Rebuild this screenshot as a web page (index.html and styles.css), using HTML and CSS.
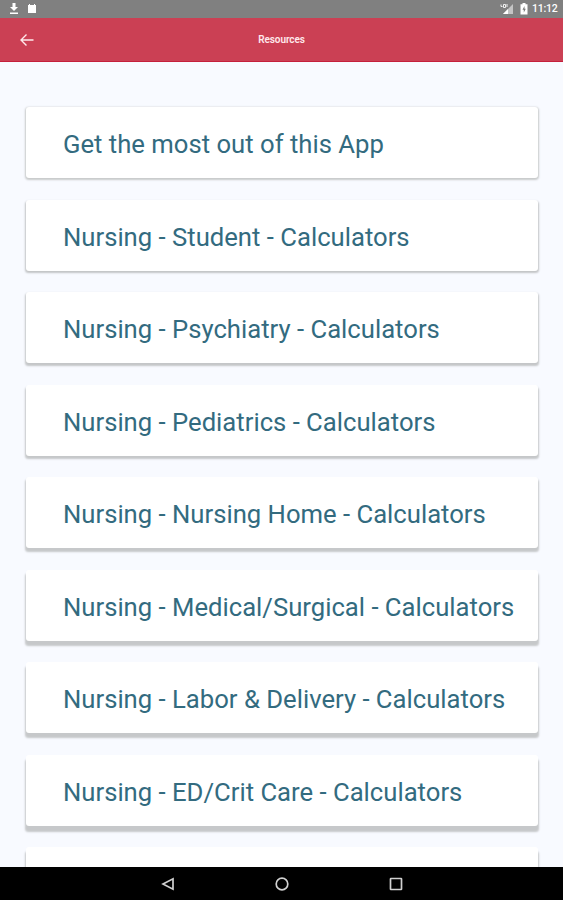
FILE: index.html
```html
<!DOCTYPE html>
<html lang="en">
<head>
<meta charset="utf-8">
<title>Resources</title>
<link rel="stylesheet" href="styles.css">
</head>
<body>
<div class="screen">
  <div class="status">
    <svg class="download" width="10" height="12" viewBox="0 0 10 12"><path d="M3.5 0h3v4H9L5 8 1 4h2.5zM1 9.5h8V11H1z" fill="#fff"/></svg>
    <svg class="card-icon" width="10" height="10" viewBox="0 0 10 10"><path d="M1 1h1V0h1v1h4V0h1v1h1v8H1z" fill="#fff"/></svg>
    <span class="spacer"></span>
    <svg class="signal" width="14" height="12" viewBox="0 0 14 12"><path d="M13 1v10H3z" fill="#c4c4c4"/><path d="M3 11l5-5v5z" fill="#fff"/><path d="M1 1.5v2h1.5m1-2h2v3h-2zM7 1v3" fill="none" stroke="#eee"/></svg>
    <svg class="battery" width="8" height="12" viewBox="0 0 8 12"><path d="M2.5 0h3v1.3H7.5V11.500H.5V1.300h2z" fill="#fff"/><path d="M4.500 3L2.500 6.700h1.300V9.500l2-3.800H4.500z" fill="#777"/></svg>
    <span class="clock">11:12</span>
  </div>
  <header class="bar">
    <svg class="back" width="16" height="14" viewBox="0 0 16 14"><path d="M14.500 7H2M7.500 1.500L2 7l5.500 5.500" fill="none" stroke="#ffe9ec" stroke-width="1.400"/></svg>
    <h1 class="title">Resources</h1>
    <span></span>
  </header>
  <main class="list">
    <div class="item d1">Get the most out of this App</div>
    <div class="item d2">Nursing - Student - Calculators</div>
    <div class="item d3">Nursing - Psychiatry - Calculators</div>
    <div class="item d4">Nursing - Pediatrics - Calculators</div>
    <div class="item d5">Nursing - Nursing Home - Calculators</div>
    <div class="item d6">Nursing - Medical/Surgical - Calculators</div>
    <div class="item d7">Nursing - Labor &amp; Delivery - Calculators</div>
    <div class="item d8">Nursing - ED/Crit Care - Calculators</div>
    <div class="item d8"></div>
  </main>
  <nav class="nav">
    <svg width="14" height="14" viewBox="0 0 14 14"><path d="M12 1.800v10.400L2 7z" fill="none" stroke="#d0d0d0" stroke-width="1.700"/></svg>
    <svg width="14" height="14" viewBox="0 0 14 14"><circle cx="7" cy="7" r="5.800" fill="none" stroke="#d0d0d0" stroke-width="1.700"/></svg>
    <svg width="14" height="14" viewBox="0 0 14 14"><rect x="1.500" y="1.500" width="11" height="11" rx=".5" fill="none" stroke="#d0d0d0" stroke-width="1.700"/></svg>
  </nav>
</div>
</body>
</html>
```
FILE: styles.css
```css
* { box-sizing: border-box; }
body { margin: 0; font-family: Roboto, sans-serif; }
.screen { width: 563px; height: 900px; display: flex; flex-direction: column; overflow: hidden; background: #f8faff; }
.status { flex: none; height: 18px; background: #808080; display: flex; align-items: center; padding: 0 5px 0 9px; color: #fff; }
.card-icon { margin-left: 8px; }
.spacer { flex: 1; }
.signal { margin-right: 6px; }
.battery { margin-right: 4px; }
.clock { font-size: 10.5px; line-height: 18px; font-weight: 500; width: 26px; letter-spacing: -0.2px; white-space: nowrap; }
.bar { flex: none; height: 44px; background: #cb4054; border-bottom: 1px solid #c51f3b; display: grid; grid-template-columns: 1fr auto 1fr; align-items: center; color: #fff; }
.back { margin-left: 19px; }
.title { margin: 0; padding-top: 1px; font-size: 10px; font-weight: 600; line-height: 12px; letter-spacing: -0.1px; color: #ffe9ec; }
.list { flex: 1; min-height: 0; overflow: hidden; padding: 45.35px 25.500px 0 26px; display: flex; flex-direction: column; gap: 21.46px; }
.item { flex: none; height: 71px; padding: 0 0 0 37px; background: #fff; border-radius: 3px; font-size: 25.67px; font-weight: 400; line-height: 75px; color: #336b7f; white-space: nowrap; }
.d1 { box-shadow: 0 1px 2px 1px #c8cacb; }
.d2 { box-shadow: 0 1.500px 2px 0.500px #c2c4c6; }
.d3 { box-shadow: 0 2px 2px 0.500px #c4c6c8; }
.d4 { box-shadow: 0 2.500px 2px 0.500px #c5c7c9; }
.d5 { box-shadow: 0 3px 2px 0.500px #c6c8ca; }
.d6 { box-shadow: 0 4px 2px 0.500px #c6c8ca; }
.d7 { box-shadow: 0 4.500px 2px 0.500px #c6c8ca; }
.d8 { box-shadow: 0 5px 2px 0.500px #c6c8ca; }
.nav { flex: none; height: 33px; background: #000; display: flex; justify-content: center; align-items: center; gap: 100px; }
```
